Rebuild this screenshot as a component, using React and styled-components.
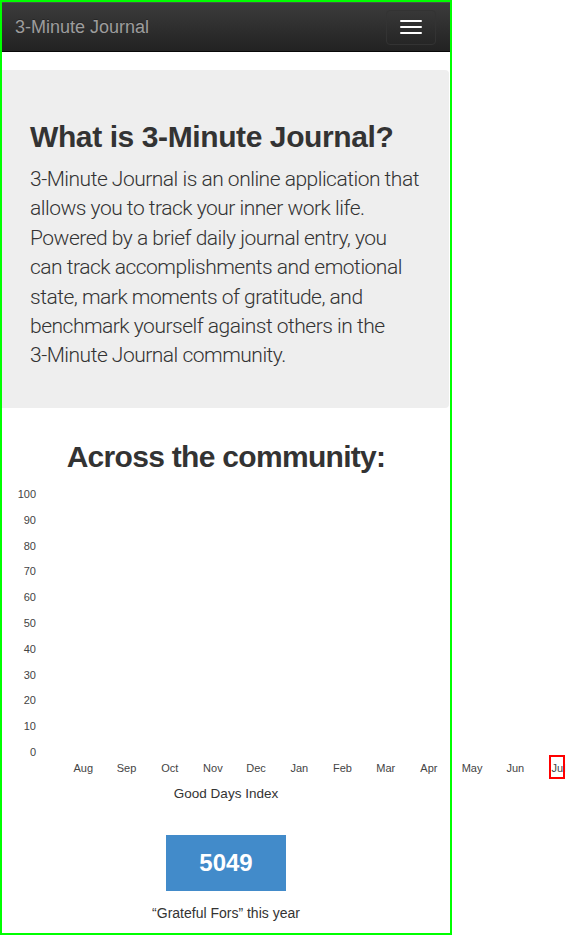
import React from "react";
import styled, { createGlobalStyle } from "styled-components";

const Global = createGlobalStyle`
  html, body { margin: 0; padding: 0; background: #fff; }
  body { font-family: "Liberation Sans", Arial, sans-serif; color: #333; }
  * { box-sizing: border-box; }
`;

const Frame = styled.div`
  width: 452px;
  height: 935px;
  border: 2px solid #00ff00;
  display: flex;
  flex-direction: column;
`;

const Navbar = styled.nav`
  height: 50px;
  flex: none;
  display: flex;
  align-items: center;
  justify-content: space-between;
  padding: 0 14px 0 13px;
  background: linear-gradient(to bottom, #3c3c3c 0%, #222 100%);
  border-bottom: 1px solid #080808;
  box-shadow: inset 0 1px 0 rgba(255, 255, 255, 0.1);
`;

const Brand = styled.a`
  font-size: 18px;
  color: #9d9d9d;
  text-decoration: none;
  text-shadow: 0 -1px 0 rgba(0, 0, 0, 0.25);
  margin-top: 1px;
`;

const Toggle = styled.button`
  width: 50px;
  height: 35px;
  margin-top: 1px;
  background: transparent;
  border: 1px solid #333;
  border-radius: 4px;
  display: flex;
  flex-direction: column;
  align-items: center;
  justify-content: center;
  gap: 4px;
  padding: 0;
`;

const Bar = styled.span`
  display: block;
  width: 22px;
  height: 2px;
  border-radius: 1px;
  background: #fff;
`;

const Jumbotron = styled.section`
  margin: 18px 1px 0 0;
  background: #eee;
  border-radius: 0 4px 4px 0;
  padding: 50px 20px 37px 28px;
`;

const Title = styled.h1`
  margin: 0 0 12px;
  font-size: 30px;
  line-height: 33px;
  font-weight: 700;
  letter-spacing: -0.4px;
  color: #333;
`;

const Lead = styled.p`
  margin: 0;
  font-family: Roboto, "Liberation Sans", Arial, sans-serif;
  font-size: 21px;
  line-height: 29.4px;
  font-weight: 300;
  letter-spacing: -0.5px;
  color: #333;
  white-space: nowrap;
`;

const Community = styled.section`
  display: flex;
  flex-direction: column;
  align-items: center;
`;

const SubTitle = styled.h2`
  margin: 32px 0 7px;
  font-size: 30px;
  line-height: 33px;
  font-weight: 700;
  letter-spacing: -0.7px;
  color: #333;
`;

const ChartBox = styled.div`
  align-self: stretch;
  height: 300px;
`;

const ChartSvg = styled.svg`
  display: block;
  overflow: visible;
`;

const AxisLabel = styled.div`
  margin-top: 5px;
  font-size: 13.5px;
  line-height: 18px;
  color: #333;
`;

const StatBox = styled.div`
  margin-top: 32px;
  width: 120px;
  height: 56px;
  background: #428bca;
  color: #fff;
  font-size: 24px;
  font-weight: 700;
  display: flex;
  align-items: center;
  justify-content: center;
`;

const StatCaption = styled.div`
  margin-top: 12px;
  font-size: 14px;
  line-height: 20px;
  color: #333;
`;

const months = ["Aug", "Sep", "Oct", "Nov", "Dec", "Jan", "Feb", "Mar", "Apr", "May", "Jun", "Jul"];
const ticks = [100, 90, 80, 70, 60, 50, 40, 30, 20, 10, 0];

function Chart() {
  return (
    <ChartSvg width="448" height="300" viewBox="0 0 448 300">
      <g fill="#444" fontFamily="Liberation Sans, Arial, sans-serif" fontSize="11">
        {ticks.map((t, i) => (
          <text key={t} x="34" y={14 + i * 25.8} textAnchor="end" dominantBaseline="central">
            {t}
          </text>
        ))}
        {months.map((m, i) => (
          <text key={m} x={81.3 + i * 43.2} y="288" textAnchor="middle" dominantBaseline="central">
            {m}
          </text>
        ))}
      </g>
      <rect x="548" y="276" width="14" height="22" fill="none" stroke="#ff0000" strokeWidth="2" />
    </ChartSvg>
  );
}

export default function App() {
  return (
    <>
      <Global />
      <Frame>
        <Navbar>
          <Brand href="#">3-Minute Journal</Brand>
          <Toggle aria-label="Toggle navigation">
            <Bar />
            <Bar />
            <Bar />
          </Toggle>
        </Navbar>
        <Jumbotron>
          <Title>What is 3-Minute Journal?</Title>
          <Lead>
            3-Minute Journal is an online application that
            <br />
            allows you to track your inner work life.
            <br />
            Powered by a brief daily journal entry, you
            <br />
            can track accomplishments and emotional
            <br />
            state, mark moments of gratitude, and
            <br />
            benchmark yourself against others in the
            <br />
            3-Minute Journal community.
          </Lead>
        </Jumbotron>
        <Community>
          <SubTitle>Across the community:</SubTitle>
          <ChartBox>
            <Chart />
          </ChartBox>
          <AxisLabel>Good Days Index</AxisLabel>
          <StatBox>5049</StatBox>
          <StatCaption>“Grateful Fors” this year</StatCaption>
        </Community>
      </Frame>
    </>
  );
}
